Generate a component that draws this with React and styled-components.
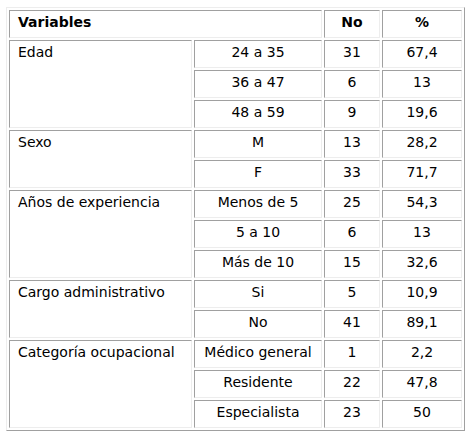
import React from 'react';
import styled, { createGlobalStyle } from 'styled-components';

const GlobalStyle = createGlobalStyle`
   body {
      margin: 0;
      background: #ffffff;
   }
`;

const groups = [
   {
      name: 'Edad',
      rows: [
         ['24 a 35', '31', '67,4'],
         ['36 a 47', '6', '13'],
         ['48 a 59', '9', '19,6'],
      ],
   },
   {
      name: 'Sexo',
      rows: [
         ['M', '13', '28,2'],
         ['F', '33', '71,7'],
      ],
   },
   {
      name: 'Años de experiencia',
      rows: [
         ['Menos de 5', '25', '54,3'],
         ['5 a 10', '6', '13'],
         ['Más de 10', '15', '32,6'],
      ],
   },
   {
      name: 'Cargo administrativo',
      rows: [
         ['Si', '5', '10,9'],
         ['No', '41', '89,1'],
      ],
   },
   {
      name: 'Categoría ocupacional',
      rows: [
         ['Médico general', '1', '2,2'],
         ['Residente', '22', '47,8'],
         ['Especialista', '23', '50'],
      ],
   },
];

function App() {
   return (
      <Wrapper>
         <GlobalStyle />
         <Table>
            <colgroup>
               <Col $w={183} />
               <Col $w={128} />
               <Col $w={56} />
               <Col $w={80} />
            </colgroup>
            <tbody>
               <tr>
                  <HeadCell colSpan={2}>Variables</HeadCell>
                  <HeadCell $center>No</HeadCell>
                  <HeadCell $center>%</HeadCell>
               </tr>
               {groups.map((group) =>
                  group.rows.map((row, i) => (
                     <tr key={group.name + row[0]}>
                        {i === 0 && (
                           <Cell rowSpan={group.rows.length}>{group.name}</Cell>
                        )}
                        {row.map((value, j) => (
                           <Cell key={j} $center>
                              {value}
                           </Cell>
                        ))}
                     </tr>
                  ))
               )}
            </tbody>
         </Table>
      </Wrapper>
   );
}

export default App;

const Wrapper = styled.div`
   padding: 7px 0 0 6px;
   font-family: 'DejaVu Sans', Verdana, sans-serif;
   font-size: 14px;
   color: #000;
`;

const Table = styled.table`
   width: 459px;
   table-layout: fixed;
   border-collapse: separate;
   border-spacing: 2px;
   border: 1px solid;
   border-color: #ededed #a0a0a0 #a0a0a0 #ededed;
`;

const Col = styled.col`
   width: ${(p) => p.$w}px;
`;

const Cell = styled.td`
   box-sizing: border-box;
   height: 28px;
   padding: 3px 8px 0 8px;
   vertical-align: top;
   text-align: ${(p) => (p.$center ? 'center' : 'left')};
   border: 1px solid;
   border-color: #a0a0a0 #ededed #ededed #a0a0a0;
   white-space: nowrap;
   line-height: 17px;
`;

const HeadCell = styled(Cell)`
   font-weight: 700;
`;
